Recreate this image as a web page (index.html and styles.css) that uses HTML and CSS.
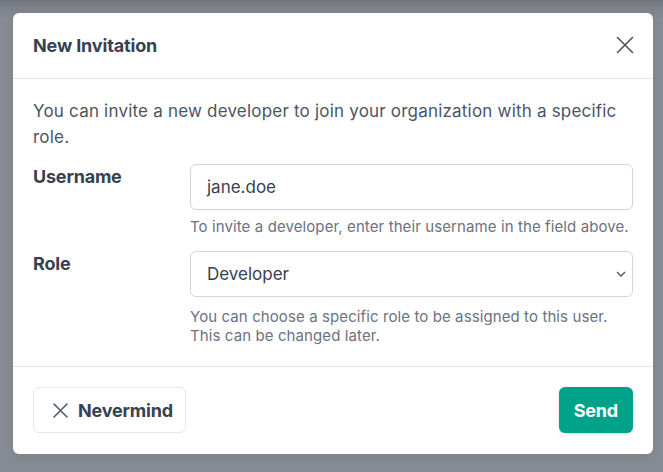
FILE: index.html
```html
<!DOCTYPE html>
<html lang="en">
<head>
<meta charset="utf-8">
<title>New Invitation</title>
<link rel="stylesheet" href="styles.css">
</head>
<body>
<div class="backdrop">
  <div class="modal">
    <div class="modal-header">
      <h2 class="modal-title">New Invitation</h2>
      <button class="close-btn" aria-label="Close">
        <svg width="18" height="18" viewBox="0 0 18 18"><path d="M1.5 1.5L16.5 16.5M16.5 1.5L1.5 16.5" stroke="#4b5563" stroke-width="1.6" stroke-linecap="round" fill="none"/></svg>
      </button>
    </div>
    <div class="modal-body">
      <p class="intro">You can invite a new developer to join your organization with a specific role.</p>
      <div class="field">
        <label class="field-label">Username</label>
        <div class="field-control">
          <div class="input">jane.doe</div>
          <p class="help">To invite a developer, enter their username in the field above.</p>
        </div>
      </div>
      <div class="field">
        <label class="field-label">Role</label>
        <div class="field-control">
          <div class="input select">
            <span>Developer</span>
            <svg width="10" height="6" viewBox="0 0 10 6"><path d="M1 1L5 5L9 1" stroke="#4b5563" stroke-width="1.3" fill="none"/></svg>
          </div>
          <p class="help help-role">You can choose a specific role to be assigned to this user.<br>This can be changed later.</p>
        </div>
      </div>
    </div>
    <div class="modal-footer">
      <button class="btn btn-secondary">
        <svg width="15" height="15" viewBox="0 0 15 15"><path d="M1 1L14 14M14 1L1 14" stroke="#4b5563" stroke-width="1.5" stroke-linecap="round" fill="none"/></svg>
        Nevermind
      </button>
      <button class="btn btn-primary">Send</button>
    </div>
  </div>
</div>
</body>
</html>
```
FILE: styles.css
```css
* { box-sizing: border-box; }
html, body { margin: 0; padding: 0; }
body {
  width: 663px;
  height: 472px;
  overflow: hidden;
  font-family: Inter, "Noto Sans", sans-serif;
  background: #878c94;
}
.backdrop {
  width: 663px;
  height: 472px;
  padding: 13px 10px 0 13px;
  background: linear-gradient(to bottom, #6f747c 0px, #7d828a 8px, #878c94 20px);
}
.modal {
  width: 640px;
  height: 441px;
  background: #fff;
  border-radius: 6px;
  display: flex;
  flex-direction: column;
  box-shadow: 0 4px 12px rgba(0,0,0,0.08);
}
.modal-header {
  height: 66px;
  padding: 0 20px;
  display: flex;
  align-items: center;
  justify-content: space-between;
  border-bottom: 1px solid #e5e7eb;
}
.modal-title {
  margin: 0;
  font-size: 18px;
  font-weight: 700;
  color: #374151;
  letter-spacing: -0.15px;
}
.close-btn {
  background: none;
  border: 0;
  padding: 0;
  width: 18px;
  height: 18px;
  display: flex;
  margin-right: -1px;
  margin-top: -1px;
}
.modal-body {
  padding: 19px 20px 21px;
  border-bottom: 1px solid #e5e7eb;
}
.intro {
  margin: 0 0 14px;
  font-size: 17px;
  line-height: 26px;
  color: #4b5563;
  letter-spacing: 0.2px;
}
.field {
  display: grid;
  grid-template-columns: 157px 1fr;
  margin-top: 15px;
}
.field:first-of-type { margin-top: 0; }
.field-label {
  font-size: 18px;
  font-weight: 700;
  color: #374151;
  padding-top: 2px;
  letter-spacing: -0.2px;
}
.input {
  height: 46px;
  border: 1px solid #d1d5db;
  border-radius: 6px;
  padding: 0 16px;
  display: flex;
  align-items: center;
  font-size: 17px;
  color: #374151;
}
.select {
  justify-content: space-between;
  padding-right: 6px;
}
.help {
  margin: 7px 0 0;
  font-size: 15px;
  line-height: 19px;
  color: #6b7280;
  letter-spacing: 0.1px;
}
.help-role {
  margin-top: 10px;
}
.modal-footer {
  flex: 1;
  padding: 0 20px 1px;
  display: flex;
  align-items: center;
  justify-content: space-between;
}
.btn {
  height: 46px;
  border-radius: 6px;
  font-family: Inter, "Noto Sans", sans-serif;
  font-size: 18px;
  font-weight: 700;
  letter-spacing: -0.2px;
  display: flex;
  align-items: center;
  cursor: pointer;
}
.btn-secondary {
  background: #fff;
  border: 1px solid #e5e7eb;
  color: #374151;
  padding: 0 12px 0 19px;
  gap: 10px;
}
.btn-primary {
  background: #00a389;
  border: 0;
  color: #fff;
  padding: 0 15px;
  box-shadow: 0 1px 3px rgba(0,0,0,0.15);
}
```
